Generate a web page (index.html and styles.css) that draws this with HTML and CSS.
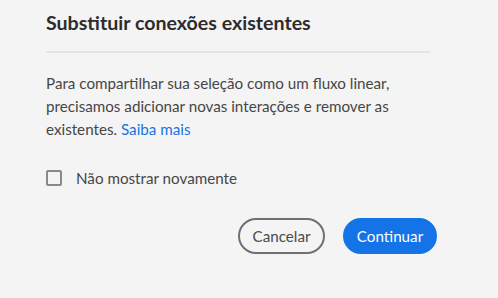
FILE: index.html
```html
<!DOCTYPE html>
<html lang="pt">
<head>
<meta charset="utf-8">
<link rel="stylesheet" href="styles.css">
</head>
<body>
<div class="dialog">
  <h1 class="title">Substituir conexões existentes</h1>
  <hr class="divider">
  <p class="content">Para compartilhar sua seleção como um fluxo linear, precisamos adicionar novas interações e remover as existentes. <a class="link" href="#">Saiba mais</a></p>
  <label class="check">
    <span class="box"></span>
    <span class="check-label">Não mostrar novamente</span>
  </label>
  <div class="actions">
    <button class="btn btn-secondary">Cancelar</button>
    <button class="btn btn-primary">Continuar</button>
  </div>
</div>
</body>
</html>
```
FILE: styles.css
```css
html, body {
  margin: 0;
  padding: 0;
  background: #f4f4f4;
}
body {
  width: 498px;
  height: 298px;
  overflow: hidden;
  font-family: Lato, "Noto Sans", sans-serif;
}
.dialog {
  width: 384px;
  padding: 9px 0 0 46px;
  display: flex;
  flex-direction: column;
}
.title {
  margin: 0;
  font-size: 19.6px;
  line-height: 27px;
  font-weight: 700;
  color: #2c2c2c;
}
.divider {
  margin: 15px 0 0 0;
  border: 0;
  height: 2px;
  background: #e4e4e4;
}
.content {
  margin: 19px 0 0 0;
  font-size: 15.2px;
  line-height: 23px;
  color: #464646;
  width: 384px;
}
.link {
  color: #1473e6;
  text-decoration: none;
}
.check {
  margin-top: 27px;
  display: flex;
  align-items: center;
  gap: 14px;
  height: 20px;
}
.box {
  width: 12px;
  height: 12px;
  border: 2px solid #8a8a8a;
  border-radius: 2px;
  background: #f4f4f4;
}
.check-label {
  font-size: 15.2px;
  color: #464646;
}
.actions {
  margin-top: 30px;
  display: flex;
  justify-content: flex-end;
  gap: 18px;
  width: 391px;
}
.btn {
  height: 36px;
  border-radius: 18px;
  font-family: Lato, "Noto Sans", sans-serif;
  font-size: 15.2px;
  padding: 0 10px;
  cursor: pointer;
}
.btn-secondary {
  background: transparent;
  border: 2px solid #707070;
  color: #4b4b4b;
  width: 87px;
}
.btn-primary {
  background: #1473e6;
  border: 2px solid #1473e6;
  color: #ffffff;
  font-weight: 400;
  width: 94px;
}
```
